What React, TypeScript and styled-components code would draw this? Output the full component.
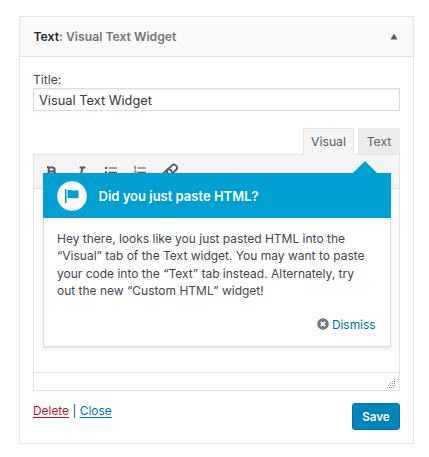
import React from "react";
import styled, { createGlobalStyle } from "styled-components";

const Global = createGlobalStyle`
  * { box-sizing: border-box; }
  body { margin: 0; background: #fff; color: #44484c; font: 12px/17.33px Inter, sans-serif; }
`;
const Widget = styled.section`
  width: 395px;
  height: 428px;
  margin: 16px 0 0 19px;
  border: 1px solid #e7e7e7;
  box-shadow: 0 1px 1px rgba(0, 0, 0, 0.04);
`;
const Header = styled.header`
  display: flex;
  align-items: center;
  justify-content: space-between;
  height: 40px;
  padding: 0 15px 0 13.5px;
  border-bottom: 1px solid #e5e5e5;
  background: #fafafa;
`;
const Heading = styled.h3`
  margin: 0;
  font-size: 12.2px;
  font-weight: 600;
  color: #72777c;
  strong { color: #23282d; font-weight: 600; }
`;
const Content = styled.div`
  padding: 14px 13px 0;
`;
const Label = styled.label`
  display: block;
  height: 17px;
  font-size: 12.2px;
`;
const Input = styled.input`
  display: block;
  width: 367px;
  height: 23px;
  padding: 1px 5px 0;
  border: 1px solid #ddd;
  box-shadow: inset 0 1px 2px rgba(0, 0, 0, 0.07);
  font: 12.85px Inter, sans-serif;
  color: #32373c;
  outline: 0;
`;
const Tabs = styled.div`
  display: flex;
  justify-content: flex-end;
  gap: 4px;
  margin-top: 17px;
  height: 26px;
`;
const Tab = styled.button<{ $active?: boolean; $width: number }>`
  position: relative;
  z-index: 1;
  width: ${(p) => p.$width}px;
  height: ${(p) => (p.$active ? 27 : 26)}px;
  padding: 0 0 1px;
  border: 1px solid ${(p) => (p.$active ? "#e8e8e8" : "#ebebeb")};
  border-bottom: 0;
  background: ${(p) => (p.$active ? "#f5f5f5" : "#ebebeb")};
  font: 12.2px Inter, sans-serif;
  color: ${(p) => (p.$active ? "#555d66" : "#666")};
`;
const Editor = styled.div`
  position: relative;
  display: flex;
  flex-direction: column;
  width: 367px;
  height: 237px;
  border: 1px solid #e5e5e5;
`;
const Toolbar = styled.div`
  height: 34px;
  flex: none;
  border-bottom: 1px solid #e2e2e2;
  background: #f5f5f5;
  svg { display: block; }
`;
const Canvas = styled.div`
  flex: 1;
`;
const Status = styled.div`
  display: flex;
  justify-content: flex-end;
  align-items: flex-end;
  height: 18px;
  padding: 0 3px 2px 0;
  border-top: 1px solid #e5e5e5;
`;
const Pointer = styled.div`
  position: absolute;
  left: 9px;
  top: 18px;
  width: 348px;
  height: 174px;
  border: 1px solid #dedede;
  border-top: 0;
  background: #fff;
  box-shadow: 0 2px 4px rgba(0, 0, 0, 0.09);
`;
const Arrow = styled.svg`
  position: absolute;
  left: 309px;
  top: -12px;
`;
const Banner = styled.div`
  display: flex;
  align-items: center;
  gap: 11.5px;
  height: 45px;
  margin: 0 -1px;
  padding: 1px 0 0 14px;
  background: #00a0d2;
  color: #fff;
  font-size: 13px;
  font-weight: 600;
`;
const BannerTitle = styled.span`
  padding-top: 2px;
`;
const Message = styled.p`
  margin: 0;
  padding: 12px 0 0 13px;
  white-space: nowrap;
`;
const Dismiss = styled.a`
  display: flex;
  align-items: center;
  justify-content: flex-end;
  gap: 3px;
  margin: 16.5px 14.5px 0 0;
  color: #0073aa;
  font-size: 11.9px;
`;
const Actions = styled.footer`
  display: flex;
  justify-content: space-between;
  padding-top: 12px;
`;
const Links = styled.div`
  font-size: 11.9px;
  line-height: 16px;
`;
const Link = styled.a<{ $danger?: boolean }>`
  color: ${(p) => (p.$danger ? "#b81c23" : "#0073aa")};
  text-decoration: underline;
  text-underline-offset: 2px;
`;
const Save = styled.button`
  width: 48px;
  height: 27px;
  padding: 0;
  border: 1px solid #0075a8;
  border-radius: 3px;
  background: #0085ba;
  color: #fff;
  font: 600 11.6px Inter, sans-serif;
`;

const FormatIcons = () => (
  <svg width="160" height="33" fill="none" stroke="#555d66" strokeWidth="1.2">
    <path strokeWidth="2" d="M14.7 12.5h3.6q2.4 0 2.4 2T18.3 16.5H14.7m0-5v9.4h3.8q2.7 0 2.7-2.3T18.5 16.5M13 12.2h2" />
    <path strokeWidth="2" d="M45.7 12.5H51.5M48.7 12.5l-2.3 8M44 20.5h5" />
    <path d="M74.5 13h8.5M74.5 17.3h8.5M74.5 21.3h8.5M103.5 13h8.5M103.5 17.3h8.5M103.5 21.3h8.5" />
    <path strokeWidth="2" d="M71 13h2M71 17.3h2M71 21.3h2" />
    <path strokeWidth="0.9" d="m100 12 1.2-.7V15m-1.3 1.3h2.2v1l-2.1 2h2.2" />
    <g strokeWidth="1.8" transform="rotate(-42 136 16.5)">
      <rect x="126" y="13.4" width="11.5" height="6" rx="3" />
      <rect x="133" y="13.4" width="11.5" height="6" rx="3" />
    </g>
  </svg>
);

export default function App() {
  return (
    <>
      <Global />
      <Widget>
        <Header>
          <Heading><strong>Text</strong>: Visual Text Widget</Heading>
          <svg width="8" height="7"><path d="M4 .5 7.5 6.5h-7z" fill="#555d66" /></svg>
        </Header>
        <Content>
          <Label htmlFor="title">Title:</Label>
          <Input id="title" defaultValue="Visual Text Widget" />
          <Tabs>
            <Tab $active $width={51}>Visual</Tab>
            <Tab $width={42}>Text</Tab>
          </Tabs>
          <Editor>
            <Toolbar><FormatIcons /></Toolbar>
            <Canvas />
            <Status>
              <svg width="9" height="9" fill="#999">
                <path d="M7 0h1v1H7zM5 2h1v1H5zM7 2h1v1H7zM3 4h1v1H3zM5 4h1v1H5zM7 4h1v1H7zM1 6h1v1H1zM3 6h1v1H3zM5 6h1v1H5zM7 6h1v1H7zM0 8h1v1H0zM2 8h1v1H2zM4 8h1v1H4zM6 8h1v1H6z" />
              </svg>
            </Status>
            <Pointer>
              <Arrow width="24" height="13"><path d="m12 0 12 12v1H0v-1z" fill="#00a0d2" /></Arrow>
              <Banner>
                <svg width="30" height="30">
                  <circle cx="15" cy="15" r="14.8" fill="#fff" />
                  <path d="M8 8h1.5v14H8zM10.5 9c3-.3 4.5.8 11 .3v7.9c-6 .3-8-.5-11-.2z" fill="#00a0d2" />
                </svg>
                <BannerTitle>Did you just paste HTML?</BannerTitle>
              </Banner>
              <Message>
                Hey there, looks like you just pasted HTML into the<br />
                “Visual” tab of the Text widget. You may want to paste<br />
                your code into the “Text” tab instead. Alternately, try<br />
                out the new “Custom HTML” widget!
              </Message>
              <Dismiss>
                <svg width="12" height="12">
                  <circle cx="6" cy="6" r="5.8" fill="#72777c" />
                  <path d="m3.8 3.8 4.4 4.4m0-4.4L3.8 8.2" stroke="#fff" strokeWidth="1.9" />
                </svg>
                Dismiss
              </Dismiss>
            </Pointer>
          </Editor>
          <Actions>
            <Links><Link $danger>Delete</Link> | <Link>Close</Link></Links>
            <Save>Save</Save>
          </Actions>
        </Content>
      </Widget>
    </>
  );
}
